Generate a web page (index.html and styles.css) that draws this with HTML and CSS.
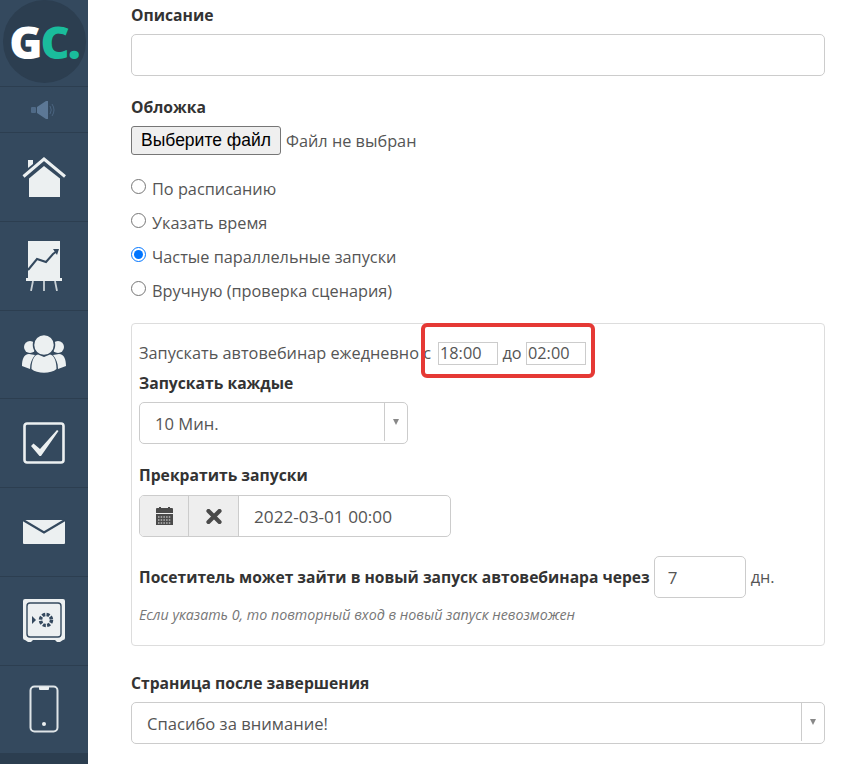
FILE: index.html
```html
<!DOCTYPE html>
<html lang="ru">
<head>
<meta charset="utf-8">
<title>Автовебинар</title>
<link rel="stylesheet" href="styles.css">
</head>
<body>
<div class="page">
  <nav class="sidebar">
    <div class="logo-cell">
      <div class="logo"><span class="logo-g">G</span><span class="logo-c">C.</span></div>
    </div>
    <div class="sound-cell">
      <svg width="28" height="20" viewBox="0 0 28 20"><rect x="1" y="7" width="5" height="6" rx="1" fill="#4f6a87"/><path d="M7 7 L16 1 H18 V19 H16 L7 13Z" fill="#5c7896"/><path d="M20 6 Q22.500 10 20 14M22 4 Q26 10 22 16" fill="none" stroke="#4a6480" stroke-width="1"/></svg>
    </div>
    <a class="nav-item nav-home">
      <svg width="46" height="44" viewBox="0 0 46 44"><path d="M7 5 H12 V9 L7 13Z" fill="#ecf0f1"/><path d="M2.500 21.500 L23 4 L44 21.500" fill="none" stroke="#ecf0f1" stroke-width="3"/><path d="M8 23.500 L23 11 L39 23.500 V42 H8Z" fill="#ecf0f1"/></svg>
    </a>
    <a class="nav-item nav-chart">
      <svg width="36" height="50" viewBox="0 0 36 50"><path d="M2 0 H34 V37 H2Z" fill="#ecf0f1"/><path d="M2 29 L11 18 L20 21 L27 13 L31 10" fill="none" stroke="#34495e" stroke-width="2"/><path d="M27 8 L33 8 L31 14Z" fill="#34495e"/><rect x="0" y="37" width="36" height="3" fill="#ecf0f1"/><path d="M7 40 L5 50M18 40 V50M29 40 L31 50" stroke="#c9d1d6" stroke-width="1.800"/></svg>
    </a>
    <a class="nav-item nav-users">
      <svg width="46" height="38" viewBox="0 0 46 38"><circle cx="9" cy="12" r="6" fill="#ecf0f1"/><circle cx="37" cy="12" r="6" fill="#ecf0f1"/><path d="M1 31 C1 24 3 19 8 19 L14 20 C11 24 9 28 9 34 Z M45 31 C45 24 43 19 38 19 L32 20 C35 24 37 28 37 34Z" fill="#ecf0f1"/><circle cx="23" cy="10" r="10.500" stroke="#34495e" stroke-width="1.500" fill="#ecf0f1"/><path d="M10.500 34 C10.500 26 13 20 17 19.500 L23 22 L29 19.500 C33 20 35.500 26 35.500 34 C30 39 16 39 10.500 34Z" fill="#ecf0f1"/></svg>
    </a>
    <a class="nav-item nav-check">
      <svg width="44" height="44" viewBox="0 0 44 44"><rect x="2.500" y="2.500" width="39" height="39" rx="2.500" fill="none" stroke="#ecf0f1" stroke-width="2.600"/><path d="M9 25 L11.500 22.500 L18 28 L35 9 L36.500 10 L19 35 H17.500Z" fill="#ecf0f1"/></svg>
    </a>
    <a class="nav-item nav-mail">
      <svg width="44" height="26" viewBox="0 0 44 26"><path d="M1 1 H43 V24 Q43 25 42 25 H2 Q1 25 1 24Z" fill="#ecf0f1"/><path d="M1 1 L22 13.500 L43 1" fill="none" stroke="#34495e" stroke-width="2.200"/></svg>
    </a>
    <a class="nav-item nav-safe">
      <svg width="44" height="44" viewBox="0 0 44 44"><path d="M3 0 H41 Q43 0 43 2 V39 Q43 41 41 41 L38 43 H35 L33 41 H11 L9 43 H6 L3 41 Q1 41 1 39 V2 Q1 0 3 0Z" fill="#ecf0f1"/><rect x="5" y="4" width="34" height="34" rx="3" fill="none" stroke="#34495e" stroke-width="1.400"/><circle cx="24" cy="21" r="5.500" fill="none" stroke="#34495e" stroke-width="3.500" stroke-dasharray="3 1.300"/><path d="M10 17 L14 21 L10 25Z" fill="#34495e"/></svg>
    </a>
    <a class="nav-item nav-phone">
      <svg width="30" height="48" viewBox="0 0 30 48"><rect x="1.500" y="1.500" width="27" height="45" rx="4" fill="none" stroke="#dfe5e8" stroke-width="2"/><path d="M10 2 H20 V4 Q20 5 19 5 H11 Q10 5 10 4Z" fill="#ecf0f1"/><circle cx="15" cy="39" r="2" fill="#ecf0f1"/></svg>
    </a>
    <div class="nav-rest"></div>
  </nav>

  <main class="content">
    <section class="field field-desc">
      <label class="label">Описание</label>
      <input class="text-input wide" type="text">
    </section>

    <section class="field field-cover">
      <label class="label">Обложка</label>
      <div class="file-row">
        <button class="file-btn" type="button">Выберите файл</button>
        <span class="file-name">Файл не выбран</span>
      </div>
    </section>

    <div class="radios">
      <label class="radio"><input type="radio" name="mode"><span>По расписанию</span></label>
      <label class="radio"><input type="radio" name="mode"><span>Указать время</span></label>
      <label class="radio"><input type="radio" name="mode" checked><span>Частые параллельные запуски</span></label>
      <label class="radio"><input type="radio" name="mode"><span>Вручную (проверка сценария)</span></label>
    </div>

    <section class="panel">
      <div class="daily">
        <span class="daily-text">Запускать автовебинар ежедневно с</span>
        <input class="time" type="text" value="18:00">
        <span class="to">до</span>
        <input class="time" type="text" value="02:00">
        <div class="highlight"></div>
      </div>
      <label class="label label-every">Запускать каждые</label>
      <div class="select select-small">
        <span class="select-value">10 Мин.</span>
        <span class="select-arrow"><i></i></span>
      </div>
      <label class="label label-stop">Прекратить запуски</label>
      <div class="date-group">
        <span class="addon">
          <svg width="17" height="18" viewBox="0 0 17 18"><path d="M0 2 Q0 1 1 1 H3 V0 H5 V1 H12 V0 H14 V1 H16 Q17 1 17 2 V6 H0Z M0 7 H17 V18 H0Z" fill="#4a4a4a"/><path d="M2 10 H15M2 13 H15M2 16 H15" stroke="#eee" stroke-width="1" stroke-dasharray="1.500 1.200"/></svg>
        </span>
        <span class="addon">
          <svg width="16" height="15" viewBox="0 0 16 15"><path d="M2.500 2 L13.500 13M13.500 2 L2.500 13" stroke="#4a4a4a" stroke-width="4.200" stroke-linecap="round"/></svg>
        </span>
        <span class="date-value">2022-03-01 00:00</span>
      </div>
      <div class="revisit">
        <label class="revisit-label">Посетитель может зайти в новый запуск автовебинара через</label>
        <input class="num-input" type="text" value="7">
        <span class="unit">дн.</span>
      </div>
      <p class="hint">Если указать 0, то повторный вход в новый запуск невозможен</p>
    </section>

    <section class="field field-after">
      <label class="label">Страница после завершения</label>
      <div class="select select-wide">
        <span class="select-value">Спасибо за внимание!</span>
        <span class="select-arrow"><i></i></span>
      </div>
    </section>
  </main>
</div>
</body>
</html>
```
FILE: styles.css
```css
* { box-sizing: border-box; }
html, body { margin: 0; padding: 0; height: 100%; overflow: hidden; background: #fff; }
body { font-family: "Open Sans", "Noto Sans", sans-serif; font-size: 16.3px; color: #555; }
.page { display: flex; height: 764px; }

.sidebar { width: 88px; flex: none; display: flex; flex-direction: column; background: #34495e; }
.logo-cell { height: 87px; flex: none; border-bottom: 1px solid #2c3e50; display: flex; justify-content: center; }
.logo { width: 83px; height: 83px; border-radius: 50%; background: #2c3e50; display: flex; align-items: center; justify-content: center; font-family: "Open Sans", sans-serif; font-weight: 800; font-size: 45px; letter-spacing: -2px; }
.logo-g { color: #fff; }
.logo-c { color: #1abc9c; }
.sound-cell { height: 46px; flex: none; border-bottom: 1px solid #2c3e50; display: flex; align-items: center; justify-content: center; }
.nav-item { height: 88.750px; flex: none; border-bottom: 1px solid #2c3e50; display: flex; align-items: center; justify-content: center; }
.nav-rest { flex: 1; background: #2c3e50; }

.content { flex: none; width: 694px; margin-left: 43px; padding-top: 5px; }
.label { display: block; font-weight: 700; font-size: 15.7px; line-height: 20px; color: #333; }
.field-desc .label { margin-bottom: 9px; }
.text-input.wide { display: block; width: 100%; height: 42px; border: 1px solid #ccc; border-radius: 5px; background: #fff; }
.field-cover { margin-top: 21px; }
.field-cover .label { margin-bottom: 9px; }
.file-row { display: flex; align-items: center; gap: 5px; }
.file-btn { width: 150px; height: 29px; padding: 0; border: 1px solid #767676; border-radius: 3px; background: #efefef; font-family: "Liberation Sans", sans-serif; font-size: 17.5px; color: #000; }
.file-name { color: #555; }

.radios { margin-top: 17px; display: flex; flex-direction: column; }
.radio { display: flex; align-items: center; height: 34px; color: #555; }
.radio input { width: 15px; height: 15px; margin: 0 6px 5px 0; accent-color: #0075ff; }

.panel { position: relative; margin-top: 15px; height: 323px; padding: 0 7px; border: 1px solid #ddd; border-radius: 4px; }
.daily { display: flex; align-items: center; height: 26px; margin-top: 16px; color: #555; }
.daily-text { width: 299px; flex: none; white-space: nowrap; }
.time { width: 60px; height: 23px; padding: 0 1px; border: 1px solid #ccc; font: inherit; color: #555; }
.to { width: 28px; flex: none; text-align: center; }
.highlight { position: absolute; left: 289px; top: -1px; width: 174px; height: 55px; border: 4px solid #e53935; border-radius: 6px; }
.label-every { margin-top: 7px; }
.select { display: flex; align-items: stretch; height: 42px; margin-top: 9px; border: 1px solid #ccc; border-radius: 5px; background: #fff; font-size: 16.6px; color: #555; }
.select-small { width: 269px; }
.select-wide { width: 100%; }
.select-value { flex: 1; display: flex; align-items: center; padding-left: 15px; }
.select-arrow { width: 23px; flex: none; border-left: 1px solid #ccc; margin-bottom: 2px; display: flex; align-items: center; justify-content: center; }
.select-arrow i { width: 0; height: 0; border-left: 3.500px solid transparent; border-right: 3.500px solid transparent; border-top: 6px solid #888; }
.label-stop { margin-top: 21px; }
.date-group { display: flex; width: 312px; height: 42px; margin-top: 10px; border: 1px solid #ccc; border-radius: 5px; overflow: hidden; }
.addon { width: 49px; flex: none; background: #eee; border-right: 1px solid #ccc; display: flex; align-items: center; justify-content: center; }
.addon + .addon { width: 50px; }
.date-value { flex: 1; display: flex; align-items: center; padding-left: 15px; font-size: 17.2px; color: #555; }
.revisit { display: flex; align-items: center; height: 42px; margin-top: 19px; }
.revisit-label { font-weight: 700; font-size: 15.62px; color: #333; white-space: nowrap; }
.num-input { width: 92px; height: 42px; margin-left: 4px; padding: 0 13px; border: 1px solid #ccc; border-radius: 5px; font: inherit; font-size: 17px; color: #555; }
.unit { margin-left: 5px; color: #555; }
.hint { margin: 7px 0 0; font-style: italic; font-size: 14.26px; line-height: 20px; color: #777; }
.field-after { margin-top: 27px; }
```
